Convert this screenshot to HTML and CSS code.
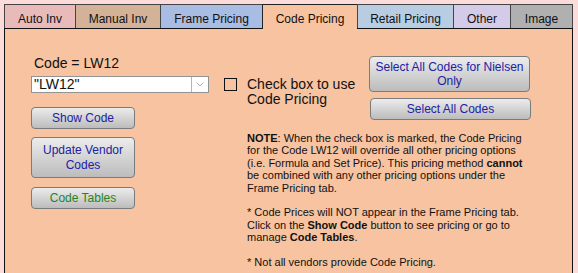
FILE: index.html
```html
<!DOCTYPE html>
<html lang="en">
    <head>
        <meta charset="UTF-8">
        <meta name="viewport" content="width=device-width, initial-scale=1.0">
        <title>Code Pricing</title>
        <link rel="stylesheet" href="styles.css">
    </head>
    <body>
        <nav class="tabs">
            <div class="tab tab-auto">Auto Inv</div>
            <div class="tab tab-manual">Manual Inv</div>
            <div class="tab tab-frame">Frame Pricing</div>
            <div class="tab tab-code tab-active">Code Pricing</div>
            <div class="tab tab-retail">Retail Pricing</div>
            <div class="tab tab-other">Other</div>
            <div class="tab tab-image">Image</div>
        </nav>
        <main class="panel">
            <section class="code-column">
                <div class="code-label">Code = LW12</div>
                <div class="code-select">
                    <span class="code-select-value">"LW12"</span>
                    <span class="code-select-arrow">
                        <svg width="8" height="5" viewBox="0 0 8 5"><path d="M0.5 0.5 L4 4 L7.5 0.5" fill="none" stroke="#b0b0b0" stroke-width="1"/></svg>
                    </span>
                </div>
                <button class="btn btn-show">Show Code</button>
                <button class="btn btn-update">Update Vendor Codes</button>
                <button class="btn btn-tables">Code Tables</button>
            </section>
            <section class="options">
                <div class="options-top">
                    <label class="use-code">
                        <span class="check-box"></span>
                        <span class="use-code-text">Check box to use Code Pricing</span>
                    </label>
                    <div class="select-buttons">
                        <button class="btn btn-wide">Select All Codes for Nielsen Only</button>
                        <button class="btn btn-wide btn-all">Select All Codes</button>
                    </div>
                </div>
                <p class="note">
                    <b>NOTE</b>: When the check box is marked, the Code Pricing for the Code LW12 will override all other pricing options (i.e. Formula and Set Price). This pricing method <b>cannot</b> be combined with any other pricing options under the Frame Pricing tab.
                    <br><br>
                    * Code Prices will NOT appear in the Frame Pricing tab. Click on the <b>Show Code</b> button to see pricing or go to manage <b>Code Tables</b>.
                    <br><br>
                    * Not all vendors provide Code Pricing.
                </p>
            </section>
        </main>
    </body>
</html>
```

FILE: styles.css
```css
body
{
    margin: 4px 5px 0 4px;
    background-color: #fcdcdb;
    font-family: "Liberation Sans", Arial, sans-serif;
    color: #111;
    overflow: hidden;
}
.tabs
{
    display: flex;
    height: 24px;
}
.tab
{
    box-sizing: border-box;
    height: 24px;
    padding-top: 7px;
    border-top: 1px solid #444;
    border-left: 1px solid #444;
    font-size: 12px;
    line-height: 14px;
    text-align: center;
    color: #111;
}
.tab-auto { width: 71px; background-color: #e9baba; }
.tab-manual { width: 85px; background-color: #d3b297; }
.tab-frame { width: 102px; background-color: #a9bce3; }
.tab-code { width: 95px; background-color: #f7c3a0; }
.tab-retail { width: 96px; background-color: #b9cde2; }
.tab-other { width: 57px; background-color: #d4cbe9; }
.tab-image
{
    width: 63px;
    background-color: #b0b0b0;
    border-right: 1px solid #444;
}
.tab-active
{
    position: relative;
    z-index: 1;
    height: 25px;
    border-top-color: #222;
    border-left-color: #222;
}
.panel
{
    display: flex;
    min-height: 260px;
    padding-left: 26px;
    background-color: #f7c3a0;
    border: 1px solid #111;
}
.code-column
{
    display: flex;
    flex-direction: column;
    align-items: flex-start;
    width: 178px;
    padding-top: 26px;
}
.code-label
{
    padding-left: 3px;
    font-size: 14px;
    line-height: 16px;
}
.code-select
{
    box-sizing: border-box;
    display: flex;
    width: 178px;
    height: 17px;
    margin-top: 5px;
    background-color: #fff;
    border: 1px solid #939393;
}
.code-select-value
{
    flex: 1;
    padding-left: 2px;
    font-size: 14px;
    line-height: 15px;
}
.code-select-arrow
{
    display: flex;
    align-items: center;
    justify-content: center;
    width: 16px;
    border-left: 1px solid #b4b4b4;
}
.btn
{
    box-sizing: border-box;
    display: block;
    width: 104px;
    padding: 3px 4px;
    background: linear-gradient(#ececec, #bcbcbc);
    border: 1px solid #7b7b7b;
    border-radius: 4px;
    font-family: "Liberation Sans", Arial, sans-serif;
    font-size: 12px;
    line-height: 14px;
    color: #2121a6;
    cursor: pointer;
}
.btn-show
{
    margin-top: 14px;
}
.btn-update
{
    margin-top: 8px;
    padding: 5px 4px 4px;
    line-height: 15px;
}
.btn-tables
{
    margin-top: 9px;
    color: #23861f;
}
.options
{
    margin-left: 15px;
}
.options-top
{
    display: flex;
    align-items: flex-start;
}
.use-code
{
    display: flex;
    align-items: flex-start;
    width: 145px;
    margin-top: 48px;
}
.check-box
{
    box-sizing: border-box;
    flex-shrink: 0;
    width: 13px;
    height: 13px;
    margin-top: 1px;
    margin-right: 10px;
    border: 1px solid #111;
}
.use-code-text
{
    font-size: 14px;
    line-height: 15px;
}
.select-buttons
{
    margin-top: 27px;
}
.btn-wide
{
    width: 161px;
}
.btn-all
{
    margin-top: 6px;
    margin-left: 1px;
}
.note
{
    width: 286px;
    margin: 12px 0 0 23px;
    font-size: 11px;
    line-height: 12.4px;
}
```
